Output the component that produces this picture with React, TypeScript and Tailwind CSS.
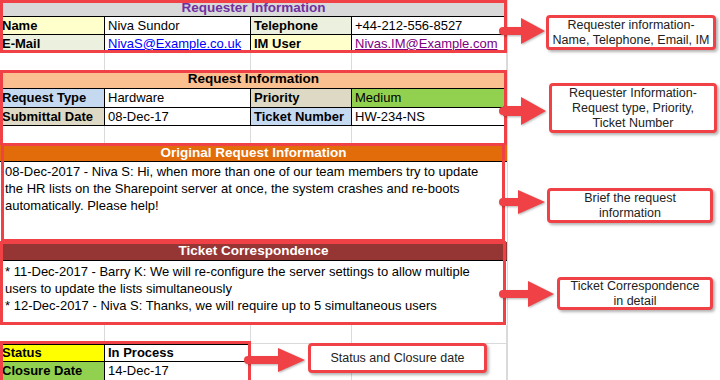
import React from 'react';

const RED = '#ef4146';

type CellProps = {
  className?: string;
  children?: React.ReactNode;
};

function Cell({ className = '', children }: CellProps) {
  return (
    <div className={`flex items-center overflow-hidden whitespace-nowrap border-r border-b ${className}`}>
      {children}
    </div>
  );
}

function BlankRow({ h }: { h: string }) {
  return (
    <div className={`grid grid-cols-[105px_146px_101px_155px] ${h}`}>
      <Cell className="border-[#dadada]" />
      <Cell className="border-[#dadada]" />
      <Cell className="border-[#dadada]" />
      <Cell className="border-[#dadada]" />
    </div>
  );
}

function Frame({ className = '' }: { className?: string }) {
  return <div className={`pointer-events-none absolute border-[3px] border-[#ef4146] ${className}`} />;
}

function Callout({ className, lines }: { className: string; lines: string[] }) {
  return (
    <div
      className={`absolute flex flex-col items-center justify-center rounded-[4px] border-[3px] border-[#ef4146] bg-white text-[12.5px] leading-[15px] text-[#222] shadow-[2px_2px_3px_rgba(0,0,0,0.3)] ${className}`}
    >
      {lines.map((l) => (
        <span key={l}>{l}</span>
      ))}
    </div>
  );
}

const arrows = [
  { x0: 503, y: 31, base: 521, tip: 545, sh: 4, hh: 13 },
  { x0: 503, y: 111, base: 521, tip: 546, sh: 5, hh: 14 },
  { x0: 503, y: 202, base: 518, tip: 545, sh: 4, hh: 12 },
  { x0: 503, y: 294, base: 528, tip: 554, sh: 4, hh: 13 },
  { x0: 248, y: 360, base: 278, tip: 305, sh: 4, hh: 12 },
];

export default function App() {
  return (
    <div className="relative h-[380px] w-[720px] overflow-hidden bg-white font-['Liberation_Sans',Arial,sans-serif] text-[13px] text-black">
      <div className="w-[508px] border-r border-[#dadada]">
        {/* requester */}
        <div className="relative">
          <div className="flex h-[17px] items-center justify-center border-b border-black bg-[#d9d9d9] text-[13.5px] font-bold text-[#7030a0]">
            Requester Information
          </div>
          <div className="grid h-[18px] grid-cols-[105px_146px_101px_155px]">
            <Cell className="border-black bg-[#ffffcc] pl-[2px] font-bold">Name</Cell>
            <Cell className="border-black pl-[3px]">Niva Sundor</Cell>
            <Cell className="border-black bg-[#ebf1de] pl-[3px] font-bold">Telephone</Cell>
            <Cell className="border-black pl-[3px]">+44-212-556-8527</Cell>
          </div>
          <div className="grid h-[18px] grid-cols-[105px_146px_101px_155px]">
            <Cell className="border-black bg-[#ebf1de] pl-[2px] font-bold">E-Mail</Cell>
            <Cell className="border-black pl-[3px] text-[#0000ff] underline">NivaS@Example.co.uk</Cell>
            <Cell className="border-black bg-[#ffffcc] pl-[3px] font-bold">IM User</Cell>
            <Cell className="border-black pl-[3px] text-[#800080] underline">Nivas.IM@Example.com</Cell>
          </div>
          <Frame className="inset-0" />
        </div>

        <BlankRow h="h-[18px]" />

        {/* request */}
        <div className="relative">
          <div className="flex h-[18px] items-center justify-center border-b border-black bg-[#fac090] text-[13.5px] font-bold">
            Request Information
          </div>
          <div className="grid h-[19px] grid-cols-[105px_146px_101px_155px]">
            <Cell className="border-black bg-[#c5d9f1] pl-[2px] font-bold">Request Type</Cell>
            <Cell className="border-black pl-[3px]">Hardware</Cell>
            <Cell className="border-black bg-[#ddd9c4] pl-[3px] font-bold">Priority</Cell>
            <Cell className="border-black bg-[#92d050] pl-[3px]">Medium</Cell>
          </div>
          <div className="grid h-[18px] grid-cols-[105px_146px_101px_155px]">
            <Cell className="border-black bg-[#ddd9c4] pl-[2px] font-bold">Submittal Date</Cell>
            <Cell className="border-black pl-[3px]">08-Dec-17</Cell>
            <Cell className="border-black bg-[#c5d9f1] pl-[3px] font-bold">Ticket Number</Cell>
            <Cell className="border-black pl-[3px]">HW-234-NS</Cell>
          </div>
          <BlankRow h="h-[19px]" />
          <Frame className="-top-px -bottom-px left-0 right-0" />
        </div>

        {/* original request */}
        <div className="relative">
          <div className="flex h-[17px] items-center justify-center border-b border-black bg-[#e26b0a] text-[13.5px] font-bold text-white">
            Original Request Information
          </div>
          <div className="h-[80px] w-[505px] border-r border-black pl-[5px] pt-px leading-[17px]">
            <div>08-Dec-2017 - Niva S: Hi, when more than one of our team members try to update</div>
            <div>the HR lists on the Sharepoint server at once, the system crashes and re-boots</div>
            <div>automatically. Please help!</div>
          </div>
          <Frame className="-top-[2px] bottom-0 left-[1px] right-[2px]" />
        </div>

        {/* correspondence */}
        <div className="relative">
          <div className="flex h-[19px] items-center justify-center border-b border-black bg-[#963634] text-[13.5px] font-bold text-white">
            Ticket Correspondence
          </div>
          <div className="h-[64px] w-[505px] border-r border-black pl-[5px] pt-[2px] leading-[17px]">
            <div>* 11-Dec-2017 - Barry K: We will re-configure the server settings to allow multiple</div>
            <div>users to update the lists simultaneously</div>
            <div>* 12-Dec-2017 - Niva S: Thanks, we will require up to 5 simultaneous users</div>
          </div>
          <Frame className="-top-px bottom-0 left-0 right-[1px]" />
        </div>

        <div className="grid h-[19px] grid-cols-[105px_146px_101px_155px]">
          <Cell className="border-[#dadada]" />
          <Cell className="border-[#dadada]" />
          <Cell className="border-[#dadada]" />
          <Cell className="border-[#dadada]" />
        </div>

        {/* status */}
        <div className="grid grid-cols-[251px_101px_155px]">
          <div className="relative">
            <div className="grid h-[18px] grid-cols-[105px_146px] border-t border-black">
              <Cell className="border-black bg-[#ffff00] pl-[2px] font-bold">Status</Cell>
              <Cell className="border-black pl-[3px] font-bold">In Process</Cell>
            </div>
            <div className="grid h-[19px] grid-cols-[105px_146px]">
              <Cell className="border-black bg-[#92d050] pl-[2px] font-bold">Closure Date</Cell>
              <Cell className="border-black pl-[3px]">14-Dec-17</Cell>
            </div>
            <Frame className="-top-[3px] -bottom-[2px] left-0 right-0" />
          </div>
          <div className="border-r border-b border-[#dadada]" />
          <div className="border-r border-b border-[#dadada]" />
        </div>
      </div>

      <svg className="pointer-events-none absolute left-0 top-0" width="720" height="380">
        {arrows.map((a, i) => (
          <g key={i} fill={RED} style={{ filter: 'drop-shadow(1px 1px 1px rgba(0,0,0,0.3))' }}>
            <path
              d={`M${a.x0} ${a.y - a.sh} L${a.base} ${a.y - a.sh} L${a.base} ${a.y - a.hh} L${a.tip} ${a.y} L${a.base} ${a.y + a.hh} L${a.base} ${a.y + a.sh} L${a.x0} ${a.y + a.sh} Z`}
            />
            <circle cx={a.x0} cy={a.y} r="4" />
          </g>
        ))}
      </svg>

      <Callout className="left-[546px] top-[15px] h-[35px] w-[170px]" lines={['Requester information-', 'Name, Telephone, Email, IM']} />
      <Callout
        className="left-[549px] top-[83px] h-[50px] w-[168px]"
        lines={['Requester Information-', 'Request type, Priority,', 'Ticket Number']}
      />
      <Callout className="left-[547px] top-[188px] h-[35px] w-[166px]" lines={['Brief the request', 'information']} />
      <Callout className="left-[557px] top-[277px] h-[33px] w-[156px]" lines={['Ticket Correspondence', 'in detail']} />
      <Callout className="left-[308px] top-[343px] h-[30px] w-[179px]" lines={['Status and Closure date']} />
    </div>
  );
}
